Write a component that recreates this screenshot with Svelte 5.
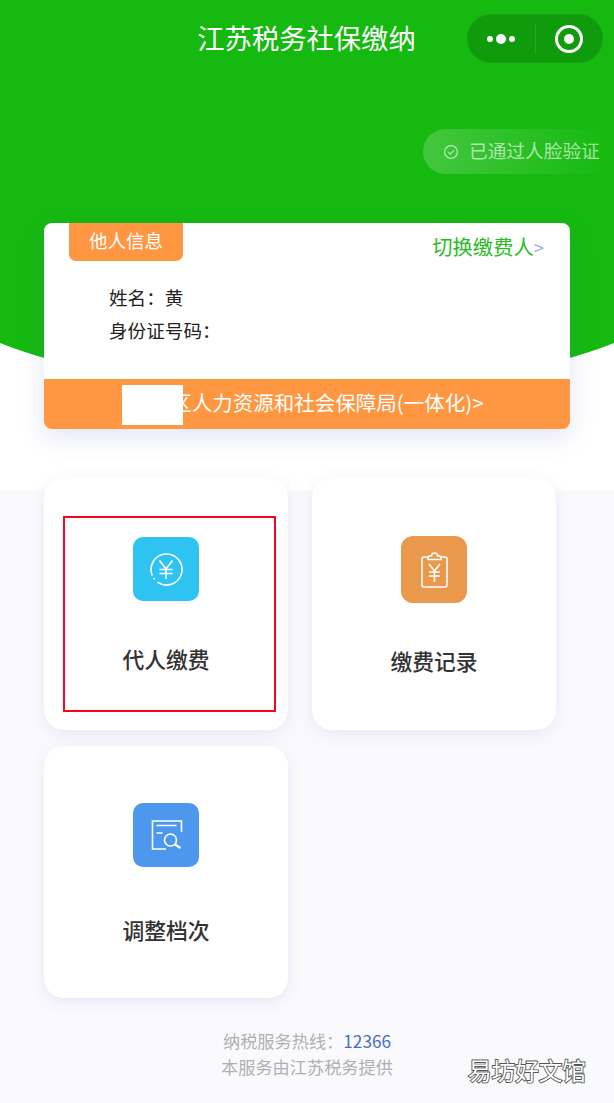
<script lang="ts">
	const tiles = [
		{ label: '代人缴费', icon: 'pay', selected: true },
		{ label: '缴费记录', icon: 'record', selected: false },
		{ label: '调整档次', icon: 'adjust', selected: false }
	];
</script>

<div class="page">
	<header class="hero">
		<div class="nav">
			<h1>江苏税务社保缴纳</h1>
			<div class="capsule">
				<span class="dots"><i></i><b></b><i></i></span>
				<span class="divider"></span>
				<span class="target"></span>
			</div>
		</div>
		<div class="verified">
			<svg width="16" height="16" viewBox="0 0 16 16" fill="none" stroke="currentColor" stroke-width="1.2">
				<circle cx="8" cy="8" r="6.4" />
				<path d="M5.2 8.1l2 2 3.7-3.8" />
			</svg>
			<span>已通过人脸验证</span>
		</div>
		<section class="card">
			<div class="tag">他人信息</div>
			<div class="switch">切换缴费人<em>&gt;</em></div>
			<div class="info">
				<p>姓名：黄</p>
				<p>身份证号码：</p>
			</div>
			<div class="bureau">
				<span class="mask"></span>
				<span>江苏区人力资源和社会保障局(一体化)&gt;</span>
			</div>
		</section>
	</header>

	<main class="tiles">
		{#each tiles as tile}
			<div class="tile">
				{#if tile.selected}<span class="outline"></span>{/if}
				<div class="icon {tile.icon}">
					{#if tile.icon === 'pay'}
						<svg width="36" height="36" viewBox="0 0 36 36" fill="none" stroke="#fff" stroke-width="1.6">
							<path d="M4 24A15.500 15.500 0 1 1 10 31.500" stroke-linecap="round" />
							<circle cx="6.200" cy="27.800" r="1" fill="#fff" stroke="none" />
							<path d="M11.500 9.500l6.500 8.500 6.500-8.500M11.500 18.500h13M11.500 22.500h13M18 18v10" />
						</svg>
					{:else if tile.icon === 'record'}
						<svg width="27" height="37" viewBox="0 0 27 37" fill="none" stroke="#fff" stroke-width="1.6">
							<path d="M7 6H3a2 2 0 0 0-2 2v26a2 2 0 0 0 2 2h21a2 2 0 0 0 2-2V8a2 2 0 0 0-2-2h-4" />
							<path d="M7 8.500h13V6.500a1.500 1.500 0 0 0-1.500-1.500h-2a3 3 0 0 0-6 0h-2A1.500 1.500 0 0 0 7 6.500z" />
							<path d="M8 13l5.500 7 5.500-7M8 21h11M8 25h11M13.500 20v11" />
						</svg>
					{:else}
						<svg width="36" height="36" viewBox="0 0 36 36" fill="none" stroke="#fff" stroke-width="1.6">
							<path d="M18 32H4.500V4h29v11" />
							<path d="M8.500 8.500h20M8.500 16h6" />
							<circle cx="22.500" cy="23" r="6" />
							<path d="M27 27.500l5.500 3.500" stroke-width="2.200" />
						</svg>
					{/if}
				</div>
				<div class="label">{tile.label}</div>
			</div>
		{/each}
	</main>

	<footer class="foot">
		<p>纳税服务热线：<span class="phone">12366</span></p>
		<p>本服务由江苏税务提供</p>
	</footer>
	<div class="watermark">易坊好文馆</div>
</div>

<style>
	:global(body) {
		margin: 0;
		background: #fafafd;
	}
	p,
	h1 {
		margin: 0;
	}
	.page {
		position: relative;
		width: 614px;
		height: 1103px;
		overflow: hidden;
		font-family: 'Noto Sans CJK SC', sans-serif;
		background: linear-gradient(#fff 490px, #fafafd 490px);
	}
	.hero {
		position: relative;
		padding-bottom: 49px;
	}
	.hero::before {
		content: '';
		position: absolute;
		top: 0;
		left: -93px;
		width: 800px;
		height: 391px;
		background: #15b90f;
		border-radius: 0 0 50% 50% / 0 0 134px 134px;
	}
	.nav {
		position: relative;
		height: 80px;
		display: flex;
		align-items: center;
		justify-content: center;
	}
	h1 {
		font-size: 27.300px;
		font-weight: 400;
		color: #fff;
		line-height: 1;
		margin-top: -4px;
		margin-right: 1px;
	}
	.capsule {
		position: absolute;
		left: 467px;
		top: 14px;
		width: 136px;
		height: 49px;
		border-radius: 25px;
		background: #0f9b0c;
		box-shadow: inset 0 0 0 1px rgba(255, 255, 255, 0.04);
		display: flex;
		align-items: center;
	}
	.dots {
		width: 68px;
		display: flex;
		align-items: center;
		justify-content: center;
		gap: 3px;
	}
	.dots i {
		width: 6px;
		height: 6px;
		border-radius: 50%;
		background: #fff;
	}
	.dots b {
		width: 10px;
		height: 10px;
		border-radius: 50%;
		background: #fff;
	}
	.divider {
		width: 1px;
		height: 30px;
		background: rgba(255, 255, 255, 0.1);
	}
	.target {
		width: 28px;
		height: 28px;
		margin-left: 19px;
		box-sizing: border-box;
		border: 3px solid #fff;
		border-radius: 50%;
		position: relative;
	}
	.target::after {
		content: '';
		position: absolute;
		inset: 6px;
		border-radius: 50%;
		background: #fff;
	}
	.verified {
		position: relative;
		width: 191px;
		height: 45px;
		margin: 49px 0 49px auto;
		box-sizing: border-box;
		padding-left: 20px;
		display: flex;
		align-items: center;
		gap: 10px;
		border-radius: 23px 0 0 23px;
		background: linear-gradient(90deg, rgba(255, 255, 255, 0.2), rgba(255, 255, 255, 0));
		color: rgba(255, 255, 255, 0.62);
		font-size: 18.700px;
		white-space: nowrap;
	}
	.verified span {
		margin-top: -4px;
	}
	.card {
		position: relative;
		margin: 0 44px;
		height: 206px;
		border-radius: 8px;
		background: #fff;
		box-shadow: 0 8px 24px rgba(90, 100, 190, 0.17);
	}
	.tag {
		position: absolute;
		left: 25px;
		top: 0;
		width: 114px;
		height: 38px;
		border-radius: 0 0 7px 7px;
		background: #ff9742;
		color: #fff;
		font-size: 18.500px;
		line-height: 35px;
		text-align: center;
	}
	.switch {
		position: absolute;
		right: 26px;
		top: 8px;
		color: #28bb22;
		font-size: 20.300px;
		line-height: 30px;
	}
	.switch em {
		font-style: normal;
		font-size: 18.500px;
		color: #a3a8f5;
	}
	.info {
		padding: 57px 0 0 65px;
		height: 99px;
		box-sizing: content-box;
		height: 99px;
		color: #222;
		font-size: 18.600px;
		line-height: 33px;
	}
	.bureau {
		position: relative;
		height: 50px;
		border-radius: 0 0 8px 8px;
		background: #ff9742;
		color: #fff;
		font-size: 20.500px;
		line-height: 46px;
		text-align: center;
	}
	.mask {
		position: absolute;
		left: 78px;
		top: 6px;
		width: 61px;
		height: 40px;
		background: #fff;
		z-index: 1;
	}
	.tiles {
		display: grid;
		grid-template-columns: 244px 244px;
		gap: 16px 24px;
		padding-left: 44px;
	}
	.tile {
		position: relative;
		height: 252px;
		border-radius: 20px;
		background: #fff;
		box-shadow: 0 4px 16px rgba(90, 100, 190, 0.12);
		display: flex;
		flex-direction: column;
		align-items: center;
	}
	.outline {
		position: absolute;
		left: 18.500px;
		top: 37.500px;
		width: 213px;
		height: 196px;
		box-sizing: border-box;
		border: 2.500px solid #f5051e;
	}
	.icon {
		width: 66px;
		height: 64px;
		margin-top: 59px;
		border-radius: 10px;
		display: flex;
		align-items: center;
		justify-content: center;
	}
	.pay {
		background: #2fc3f2;
	}
	.record {
		background: #e9984c;
		height: 67px;
		margin-top: 58px;
		border-radius: 12px;
	}
	.adjust {
		background: #4d98ec;
		margin-top: 57px;
	}
	.label {
		margin-top: 43px;
		font-size: 21.800px;
		font-weight: 500;
		line-height: 30px;
		color: #333;
	}
	.adjust + .label {
		margin-top: 48px;
	}
	.foot {
		padding-top: 30px;
		width: 614px;
		text-align: center;
		color: #b0b0b4;
		font-size: 17.200px;
		line-height: 26px;
	}
	.phone {
		color: #4a6cc8;
	}
	.watermark {
		position: absolute;
		left: 468px;
		top: 1054px;
		font-size: 23.600px;
		line-height: 32px;
		color: #fff;
		-webkit-text-stroke: 1.800px #555;
		paint-order: stroke fill;
	}
</style>
